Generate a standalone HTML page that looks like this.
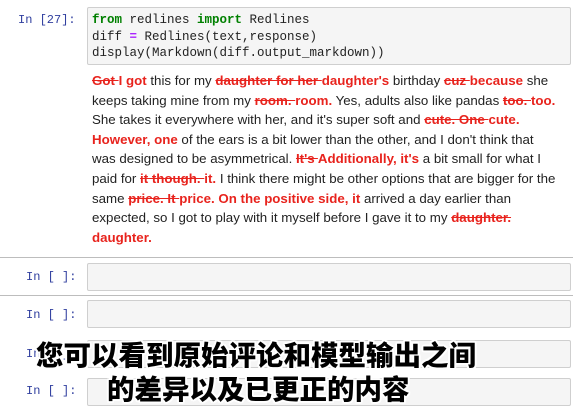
<!DOCTYPE html>
<html><head><meta charset="utf-8"><style>
body{margin:0;width:573px;height:414px;background:#fff;position:relative;overflow:hidden;font-family:"Liberation Sans",sans-serif}
.p{position:absolute;font-family:"Liberation Mono",monospace;font-size:12px;color:#303f9f}
.box{position:absolute;left:87px;width:484px;background:#f5f5f5;border:1px solid #cfcfcf;border-radius:2px;box-sizing:border-box}
.code{font-family:"Liberation Mono",monospace;font-size:12.5px;line-height:16.5px;color:#222;padding:4px 4px 0 4px;white-space:pre}
.k{color:#008000;font-weight:bold}.o{color:#aa22ff;font-weight:bold}
.out{position:absolute;left:92px;top:71px;width:480px;font-size:13.3px;line-height:19.6px;color:#222;white-space:nowrap}
.d{color:#e8231d;text-decoration:line-through;font-weight:bold}
.i{color:#e8231d;font-weight:bold}
.sep{position:absolute;left:0;width:573px;height:1px;background:#bdbdbd}
.cap{position:absolute;white-space:nowrap;font-family:"Noto Sans CJK SC",sans-serif;font-weight:900;font-size:27.5px;line-height:34px;color:#000;text-shadow:2px 0 #fff,-2px 0 #fff,0 2px #fff,0 -2px #fff,1.5px 1.5px #fff,-1.5px 1.5px #fff,1.5px -1.5px #fff,-1.5px -1.5px #fff}
</style></head><body>
<div class="p" style="left:18px;top:13px">In [27]:</div>
<div class="box" style="top:7px;height:58px"><div class="code"><span class="k">from</span> redlines <span class="k">import</span> Redlines
diff <span class="o">=</span> Redlines(text,response)
display(Markdown(diff.output_markdown))</div></div>
<div class="out"><span class="d">Got </span><span class="i">I got</span> this for my <span class="d">daughter for her </span><span class="i">daughter's</span> birthday <span class="d">cuz </span><span class="i">because</span> she<br>keeps taking mine from my <span class="d">room. </span><span class="i">room.</span> Yes, adults also like pandas <span class="d">too. </span><span class="i">too.</span><br>She takes it everywhere with her, and it's super soft and <span class="d">cute. One </span><span class="i">cute.</span><br><span class="i">However, one</span> of the ears is a bit lower than the other, and I don't think that<br>was designed to be asymmetrical. <span class="d">It's </span><span class="i">Additionally, it's</span> a bit small for what I<br>paid for <span class="d">it though. </span><span class="i">it.</span> I think there might be other options that are bigger for the<br>same <span class="d">price. It </span><span class="i">price. On the positive side, it</span> arrived a day earlier than<br>expected, so I got to play with it myself before I gave it to my <span class="d">daughter.</span><br><span class="i">daughter.</span></div>
<div class="sep" style="top:257px"></div>
<div class="p" style="left:26px;top:270px">In [ ]:</div>
<div class="box" style="top:263px;height:28px"></div>
<div class="sep" style="top:295px"></div>
<div class="p" style="left:26px;top:308px">In [ ]:</div>
<div class="box" style="top:300px;height:28px"></div>
<div class="p" style="left:26px;top:347px">In [ ]:</div>
<div class="box" style="top:340px;height:28px"></div>
<div class="p" style="left:26px;top:384px">In [ ]:</div>
<div class="box" style="top:378px;height:28px"></div>
<div class="cap" style="top:336px;left:36px">您可以看到原始评论和模型输出之间</div>
<div class="cap" style="top:370px;left:107px">的差异以及已更正的内容</div>
</body></html>
